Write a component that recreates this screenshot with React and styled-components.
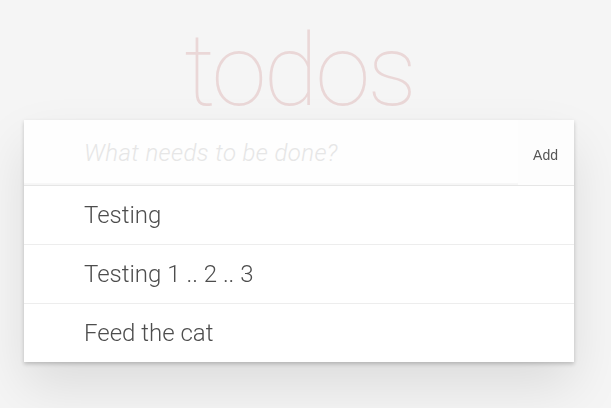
import React from "react";
import styled, { createGlobalStyle } from "styled-components";

const Global = createGlobalStyle`
  html, body { margin: 0; padding: 0; }
  html { background: #f5f5f5; min-height: 100%; }
  body {
    background: #f5f5f5;
    font-family: Roboto, "Liberation Sans", sans-serif;
    font-weight: 300;
    color: #4d4d4d;
    -webkit-font-smoothing: antialiased;
  }
`;

const Page = styled.div`
  width: 550px;
  margin: 0 0 60px 24px;
  display: flex;
  flex-direction: column;
`;

const Title = styled.h1`
  margin: 0;
  height: 120px;
  padding-top: 21px;
  box-sizing: border-box;
  font-family: Roboto, sans-serif;
  font-size: 100px;
  line-height: 100px;
  font-weight: 100;
  letter-spacing: -3px;
  text-align: center;
  color: rgba(175, 47, 47, 0.15);
  text-rendering: optimizeLegibility;
`;

const Card = styled.section`
  background: #fff;
  box-shadow: 0 2px 4px 0 rgba(0, 0, 0, 0.2), 0 25px 50px 0 rgba(0, 0, 0, 0.1);
  display: flex;
  flex-direction: column;
`;

const Form = styled.form`
  display: flex;
  height: 65px;
  border-bottom: 1px solid #e6e6e6;
`;

const Input = styled.input`
  flex: 1;
  min-width: 0;
  border: none;
  outline: none;
  margin: 0;
  padding: 16px 16px 16px 60px;
  font-family: inherit;
  font-size: 24px;
  font-weight: 300;
  color: #4d4d4d;
  caret-color: #333;
  background: rgba(0, 0, 0, 0.003);
  box-shadow: inset 0 -2px 1px rgba(0, 0, 0, 0.03);
  &::placeholder {
    font-style: italic;
    font-weight: 300;
    letter-spacing: 0.4px;
    color: #e6e6e6;
  }
`;

const AddButton = styled.button`
  width: 56px;
  border: none;
  margin: 0;
  padding: 4px 16px 0 0;
  background: #fdfdfd;
  font-family: "Liberation Sans", sans-serif;
  font-size: 14px;
  font-weight: 400;
  color: #555;
  text-align: right;
  cursor: pointer;
`;

const List = styled.ul`
  list-style: none;
  margin: 0;
  padding: 0;
`;

const Item = styled.li`
  height: 58px;
  display: flex;
  align-items: center;
  padding-left: 60px;
  font-size: 24px;
  color: #4d4d4d;
  border-bottom: 1px solid #ededed;
  &:last-child { border-bottom: none; height: 58px; }
`;

const todos = ["Testing", "Testing 1 .. 2 .. 3", "Feed the cat"];

export default function App() {
  return (
    <>
      <Global />
      <Page>
        <Title>todos</Title>
        <Card>
          <Form onSubmit={(e) => e.preventDefault()}>
            <Input autoFocus placeholder="What needs to be done?" />
            <AddButton type="submit">Add</AddButton>
          </Form>
          <List>
            {todos.map((t) => (
              <Item key={t}>{t}</Item>
            ))}
          </List>
        </Card>
      </Page>
    </>
  );
}
